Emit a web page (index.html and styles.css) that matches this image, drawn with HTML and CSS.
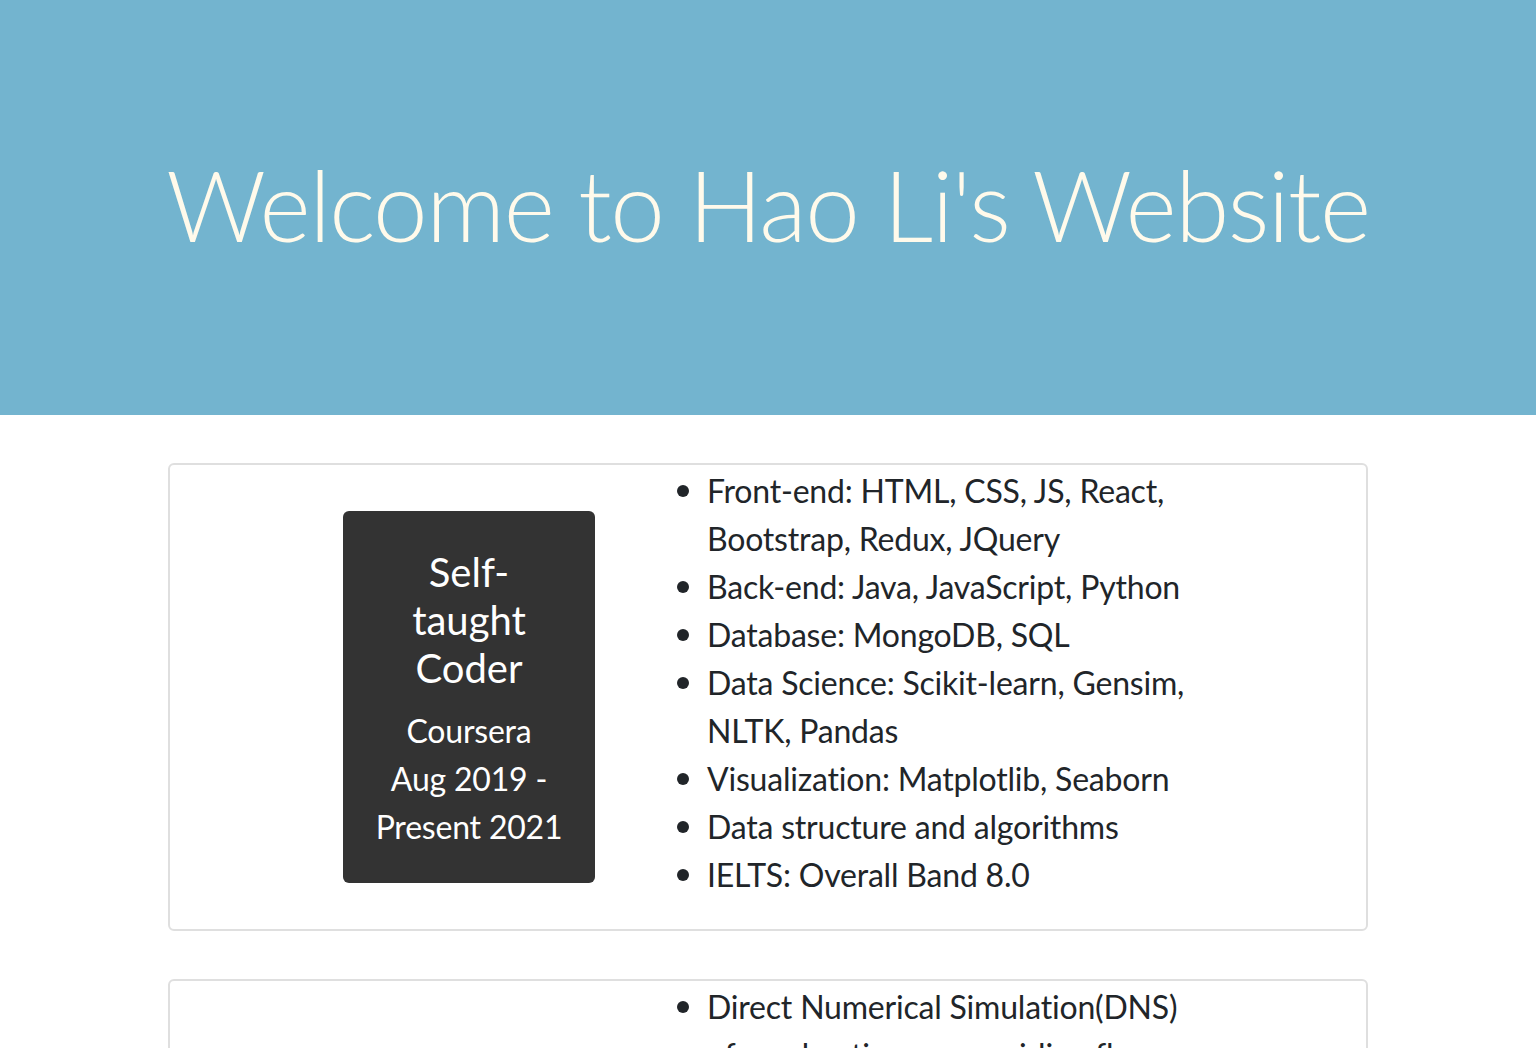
FILE: index.html
```html
<!DOCTYPE html>
<html lang="en">
<head>
<meta charset="utf-8">
<title>Hao Li</title>
<link rel="stylesheet" href="styles.css">
</head>
<body>
<header class="hero">
  <h1 class="hero-title">Welcome to Hao Li's Website</h1>
</header>
<main class="container">
  <section class="card">
    <div class="card-left">
      <div class="role-box">
        <h3 class="role-title">Self-taught Coder</h3>
        <p class="role-meta">Coursera<br>Aug 2019 - Present 2021</p>
      </div>
    </div>
    <ul class="skills">
      <li>Front-end: HTML, CSS, JS, React, Bootstrap, Redux, JQuery</li>
      <li>Back-end: Java, JavaScript, Python</li>
      <li>Database: MongoDB, SQL</li>
      <li>Data Science: Scikit-learn, Gensim, NLTK, Pandas</li>
      <li>Visualization: Matplotlib, Seaborn</li>
      <li>Data structure and algorithms</li>
      <li>IELTS: Overall Band 8.0</li>
    </ul>
  </section>
  <section class="card">
    <div class="card-left"></div>
    <ul class="skills">
      <li>Direct Numerical Simulation(DNS) of combustion on a swirling flame with high-order numerical schemes</li>
      <li>Parallel computing with MPI and OpenMP</li>
    </ul>
  </section>
</main>
</body>
</html>
```
FILE: styles.css
```css
html, body {
  margin: 0;
  padding: 0;
}
body {
  font-family: "Lato", "Open Sans", sans-serif;
  color: #212529;
  background: #ffffff;
}
.hero {
  background: #73b4cf;
  height: 415px;
  box-sizing: border-box;
  padding-top: 146px;
}
.hero-title {
  margin: 0;
  text-align: center;
  font-weight: 300;
  font-size: 98px;
  line-height: 1.2;
  letter-spacing: -1.5px;
  color: #fffaeb;
}
.container {
  width: 1200px;
  margin: 0 auto;
  padding-top: 48px;
  display: flex;
  flex-direction: column;
  gap: 48px;
}
.card {
  border: 2px solid #dfdfdf;
  border-radius: 6px;
  display: flex;
  align-items: flex-start;
}
.card-left {
  width: 497px;
  flex: none;
}
.role-box {
  margin: 46px 0 46px 173px;
  width: 252px;
  box-sizing: border-box;
  background: #333333;
  color: #ffffff;
  border-radius: 6px;
  padding: 37px 30px 32px;
  text-align: center;
}
.role-title {
  margin: 0 0 15px;
  font-weight: 400;
  font-size: 40px;
  line-height: 48px;
}
.role-meta {
  margin: 0;
  font-size: 32px;
  line-height: 48px;
  letter-spacing: -0.2px;
}
.skills {
  width: 505px;
  margin: 2px 0 30px;
  padding-left: 40px;
  font-size: 32px;
  line-height: 48px;
  letter-spacing: -0.2px;
  list-style: none;
}
.skills li::before {
  content: "";
  display: inline-block;
  width: 12px;
  height: 12px;
  border-radius: 50%;
  background: #212529;
  margin-left: -30px;
  margin-right: 18px;
  vertical-align: 6px;
}
```
